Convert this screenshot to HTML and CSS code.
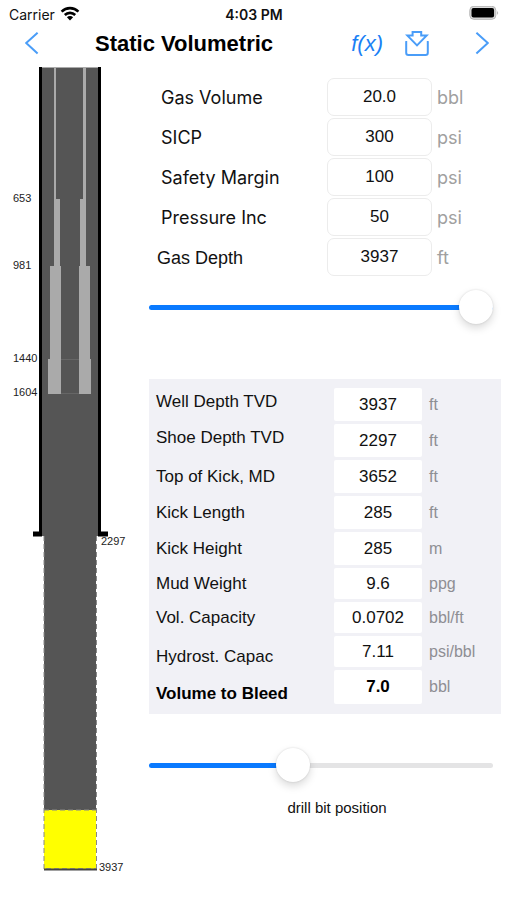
FILE: index.html
```html
<!DOCTYPE html>
<html lang="en">
  <head>
    <meta charset="utf-8">
    <meta name="viewport" content="width=device-width, initial-scale=1">
    <title>Static Volumetric</title>
    <link rel="stylesheet" href="styles.css">
  </head>
  <body>
    <div class="status-bar">
      <div class="carrier">
        <span>Carrier</span>
        <svg width="20" height="15" viewBox="0 0 20 15" aria-hidden="true">
          <g fill="none" stroke="#000" stroke-width="2.6">
            <path d="M1.6 5.6 A12 12 0 0 1 18.4 5.6" />
            <path d="M4.8 9 A7.4 7.4 0 0 1 15.2 9" />
          </g>
          <path d="M10 14.4 L6.9 11.2 A4.4 4.4 0 0 1 13.1 11.2 Z" />
        </svg>
      </div>
      <div class="clock">4:03 PM</div>
      <div class="battery">
        <svg width="30" height="15" viewBox="0 0 30 15" aria-hidden="true">
          <rect x="0.8" y="0.3" width="26" height="13" rx="4" fill="#ddd" stroke="#b4b4b4" stroke-width="1" />
          <rect x="2.5" y="2" width="22.6" height="9.6" rx="2" />
          <path d="M28.3 4.7 Q30 6.8 28.3 8.9 Z" fill="#999" />
        </svg>
      </div>
    </div>

    <header class="navbar">
      <button type="button" aria-label="Back">
        <svg width="14" height="24" viewBox="0 0 14 24"><path d="M12.6 0.8 L1.2 11 L12.6 21.6" /></svg>
      </button>
      <h1>Static Volumetric</h1>
      <button type="button" class="formula">f(x)</button>
      <button type="button" aria-label="Save">
        <svg width="24" height="26" viewBox="0 0 24 26">
          <path d="M0.3 11 H1.2 V21.8 Q1.2 24 3.4 24 H20.6 Q22.8 24 22.8 21.8 V11 H23.7" />
          <path d="M7.6 1 H16.2 V4.4 H21.8 L12 14.4 L2.2 4.4 H7.6 Z" />
        </svg>
      </button>
      <button type="button" class="next" aria-label="Next">
        <svg width="14" height="24" viewBox="0 0 14 24"><path d="M1.4 0.8 L12.8 11 L1.4 21.6" /></svg>
      </button>
    </header>

    <main>
      <svg class="well" width="140" height="810" viewBox="0 0 140 810" role="img" aria-label="Well schematic">
        <!-- cased section -->
        <rect x="39" y="1" width="62" height="469" fill="#555" />
        <path d="M39 1.5 H101" stroke="#aaa" />
        <path d="M40.5 1 V468 M99.5 1 V468" stroke="#000" stroke-width="3" />
        <path d="M33 468 H42 M98 468 H108" stroke="#000" stroke-width="5" />

        <!-- open hole -->
        <rect x="44" y="470" width="52" height="274" fill="#555" />
        <rect x="44" y="744" width="52" height="59" fill="#ff0" />
        <path d="M44 470 V804 M96.5 470 V804 M44 744 H96" stroke="#888" stroke-dasharray="5 3" fill="none" />
        <path d="M44 803.5 H97" stroke="#444" stroke-width="2" />
        <path d="M46 802.5 H97" stroke="#776" stroke-dasharray="5 3" />

        <!-- drill string -->
        <g fill="#aaa">
          <rect x="54" y="1" width="2" height="132" />
          <rect x="83" y="1" width="3" height="132" />
          <rect x="54" y="133" width="6" height="67" />
          <rect x="80" y="133" width="6" height="67" />
          <rect x="50" y="200" width="11" height="93" />
          <rect x="79" y="200" width="11" height="93" />
          <rect x="48" y="293" width="13" height="35" />
          <rect x="79" y="293" width="12" height="35" />
        </g>
        <path d="M61 293.5 H79 M61 327.5 H79" stroke="#666" />

        <g class="depths">
          <text x="13" y="136">653</text>
          <text x="13" y="203">981</text>
          <text x="13" y="296">1440</text>
          <text x="13" y="330">1604</text>
          <text x="101" y="479">2297</text>
          <text x="99" y="805">3937</text>
        </g>
      </svg>

      <div class="content">
        <form class="inputs">
          <div class="row">
            <label for="gas_volume">Gas Volume</label>
            <input type="text" id="gas_volume" value="20.0">
            <span>bbl</span>
          </div>
          <div class="row">
            <label for="sicp">SICP</label>
            <input type="text" id="sicp" value="300">
            <span>psi</span>
          </div>
          <div class="row">
            <label for="safety_margin">Safety Margin</label>
            <input type="text" id="safety_margin" value="100">
            <span>psi</span>
          </div>
          <div class="row">
            <label for="pressure_inc">Pressure Inc</label>
            <input type="text" id="pressure_inc" value="50">
            <span>psi</span>
          </div>
          <div class="row depth">
            <label for="gas_depth">Gas Depth</label>
            <input type="text" id="gas_depth" value="3937">
            <span>ft</span>
          </div>
        </form>

        <input type="range" class="slider" min="0" max="100" value="100" style="--fill: 100%" aria-label="Gas depth">

        <section class="results">
          <div class="row top">
            <label for="well_depth">Well Depth TVD</label>
            <input type="text" id="well_depth" value="3937" readonly>
            <span>ft</span>
          </div>
          <div class="row top">
            <label for="shoe_depth">Shoe Depth TVD</label>
            <input type="text" id="shoe_depth" value="2297" readonly>
            <span>ft</span>
          </div>
          <div class="row">
            <label for="top_of_kick">Top of Kick, MD</label>
            <input type="text" id="top_of_kick" value="3652" readonly>
            <span>ft</span>
          </div>
          <div class="row">
            <label for="kick_length">Kick Length</label>
            <input type="text" id="kick_length" value="285" readonly>
            <span>ft</span>
          </div>
          <div class="row">
            <label for="kick_height">Kick Height</label>
            <input type="text" id="kick_height" value="285" readonly>
            <span>m</span>
          </div>
          <div class="row short">
            <label for="mud_weight">Mud Weight</label>
            <input type="text" id="mud_weight" value="9.6" readonly>
            <span>ppg</span>
          </div>
          <div class="row short">
            <label for="vol_capacity">Vol. Capacity</label>
            <input type="text" id="vol_capacity" value="0.0702" readonly>
            <span>bbl/ft</span>
          </div>
          <div class="row short bottom">
            <label for="hydrost_capac">Hydrost. Capac</label>
            <input type="text" id="hydrost_capac" value="7.11" readonly>
            <span>psi/bbl</span>
          </div>
          <div class="row bottom total">
            <label for="volume_to_bleed">Volume to Bleed</label>
            <input type="text" id="volume_to_bleed" value="7.0" readonly>
            <span>bbl</span>
          </div>
        </section>

        <input type="range" class="slider" id="bit_position" min="0" max="100" value="41" style="--fill: 42%">
        <label class="caption" for="bit_position">drill bit position</label>
      </div>
    </main>
  </body>
</html>
```

FILE: styles.css
```css
* {
  box-sizing: border-box;
}
body {
  margin: 0;
  background: #fff;
  color: #111;
  font-family: "Liberation Sans", Arial, sans-serif;
}
button {
  display: flex;
  padding: 0;
  border: 0;
  background: none;
  color: #1a80f5;
  cursor: pointer;
}
button svg {
  fill: none;
  stroke: #4a9df8;
  stroke-width: 2;
}

.status-bar {
  display: grid;
  grid-template-columns: 1fr auto 1fr;
  align-items: center;
  height: 28px;
  padding: 0 8px 0 9px;
  font-family: Inter, sans-serif;
  font-size: 14px;
}
.carrier {
  display: flex;
  align-items: center;
  gap: 5px;
}
.carrier svg, .battery svg {
  margin-bottom: 2px;
}
.clock {
  font-weight: 600;
}
.battery {
  display: flex;
  justify-content: flex-end;
}

.navbar {
  display: flex;
  align-items: center;
  height: 32px;
  padding: 0 18px 0 25px;
}
.navbar h1 {
  margin: 0 auto 0 56px;
  font-size: 22px;
  color: #000;
}
.formula {
  margin-right: 22px;
  font-family: "Liberation Sans", Arial, sans-serif;
  font-size: 22px;
  font-style: italic;
}
.next {
  margin-left: 46px;
}

main {
  display: grid;
  grid-template-columns: 140px 1fr;
  padding-top: 6px;
}
.well {
  display: block;
}
.depths {
  font-size: 11px;
  fill: #222;
}
.content {
  display: flex;
  flex-direction: column;
  padding: 12px 6px 0 9px;
}

.row {
  display: grid;
  align-items: center;
}
.row input {
  width: 100%;
  height: 100%;
  padding: 0;
  border: 0;
  background: #fff;
  color: #111;
  font-family: inherit;
  font-size: 17px;
  text-align: center;
}
.row label {
  line-height: 20px;
}
.row span {
  color: #8e8e93;
}

.inputs {
  display: grid;
  gap: 2px;
}
.inputs .row {
  grid-template-columns: 1fr 105px 64px;
  column-gap: 5px;
  height: 38px;
  padding-left: 12px;
  font-family: Inter, sans-serif;
  font-size: 18px;
}
.inputs label {
  padding-top: 2px;
}
.inputs .depth {
  padding-left: 8px;
}
.inputs .depth label {
  font-family: "Liberation Sans", Arial, sans-serif;
}
.inputs input {
  border: 1px solid #ececec;
  border-radius: 7px;
  font-family: "Liberation Sans", Arial, sans-serif;
}
.inputs span {
  color: #a0a0a0;
}

.slider {
  -webkit-appearance: none;
  appearance: none;
  height: 34px;
  margin: 14px 8px 0 0;
  background: none;
}
.slider::-webkit-slider-runnable-track {
  height: 5px;
  border-radius: 3px;
  background: linear-gradient(to right, #0a7aff var(--fill), #e4e4e5 var(--fill));
}
.slider::-webkit-slider-thumb {
  -webkit-appearance: none;
  width: 34px;
  height: 34px;
  margin-top: -15px;
  border-radius: 50%;
  background: #fff;
  box-shadow: 0 0 2px rgba(0, 0, 0, 0.15), 0 4px 9px rgba(0, 0, 0, 0.15);
}

.results {
  display: grid;
  gap: 3px;
  margin: 55px 0 20px;
  padding: 9px 9px 10px 7px;
  background: #f1f1f6;
}
.results .row {
  grid-template-columns: 1fr 88px 63px;
  column-gap: 7px;
  height: 33px;
  font-size: 17px;
}
.results .short {
  height: 31px;
}
.results .total {
  height: 34px;
}
.results span {
  font-size: 16px;
}
.results input {
  border-radius: 2px;
}
.top label {
  align-self: start;
  line-height: 28px;
}
.bottom label {
  align-self: end;
}
.total label, .total input {
  font-weight: bold;
  color: #000;
}

.caption {
  padding: 17px 0 0 24px;
  font-size: 15px;
  text-align: center;
}
```
